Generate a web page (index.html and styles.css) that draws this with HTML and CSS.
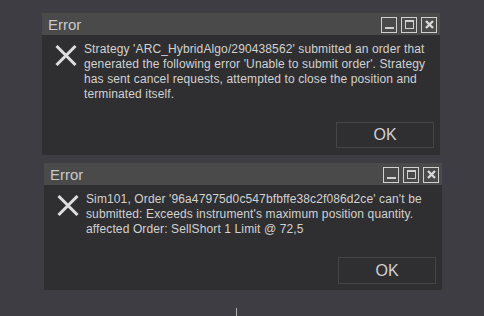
FILE: index.html
```html
<!DOCTYPE html>
<html lang="en">
<head>
  <meta charset="UTF-8">
  <title>Error</title>
  <link rel="stylesheet" href="styles.css">
</head>
<body>

  <div class="dialog first">
    <div class="title-bar">
      <span class="title">Error</span>
      <div class="win-buttons">
        <span class="win-btn min"></span>
        <span class="win-btn max"></span>
        <span class="win-btn close">
          <svg width="11" height="11" viewBox="0 0 11 11"><path d="M2 2 L9 9 M9 2 L2 9" stroke="#d8d8d8" stroke-width="2.4"/></svg>
        </span>
      </div>
    </div>
    <div class="dialog-body">
      <div class="message">
        <svg class="icon" width="22" height="21" viewBox="0 0 22 21"><path d="M1.5 1 L20.5 20 M20.5 1 L1.5 20" stroke="#dedede" stroke-width="3"/></svg>
        <p>Strategy 'ARC_HybridAlgo/290438562' submitted an order that generated the following error 'Unable to submit order'. Strategy has sent cancel requests, attempted to close the position and terminated itself.</p>
      </div>
      <button class="ok">OK</button>
    </div>
  </div>

  <div class="dialog second">
    <div class="title-bar">
      <span class="title">Error</span>
      <div class="win-buttons">
        <span class="win-btn min"></span>
        <span class="win-btn max"></span>
        <span class="win-btn close">
          <svg width="11" height="11" viewBox="0 0 11 11"><path d="M2 2 L9 9 M9 2 L2 9" stroke="#d8d8d8" stroke-width="2.4"/></svg>
        </span>
      </div>
    </div>
    <div class="dialog-body">
      <div class="message">
        <svg class="icon" width="22" height="21" viewBox="0 0 22 21"><path d="M1.5 1 L20.5 20 M20.5 1 L1.5 20" stroke="#dedede" stroke-width="3"/></svg>
        <p>Sim101, Order '96a47975d0c547bfbffe38c2f086d2ce' can't be submitted: Exceeds instrument's maximum position quantity. affected Order: SellShort 1 Limit @ 72,5</p>
      </div>
      <button class="ok">OK</button>
    </div>
  </div>

  <div class="tick"></div>

</body>
</html>
```

FILE: styles.css
```css
body {
  margin: 0;
  height: 316px;
  overflow: hidden;
  background-color: #3e3d43;
  font-family: "Liberation Sans", Arial, sans-serif;
  padding-top: 13px;
  box-sizing: border-box;
}

.dialog {
  width: 398px;
  display: flex;
  flex-direction: column;
  background-color: #2f2f31;
}

.dialog.first {
  margin-left: 42px;
  height: 142px;
}

.dialog.second {
  margin-left: 44px;
  margin-top: 8px;
  height: 127px;
}

.title-bar {
  height: 22px;
  background-color: #4a4a4a;
  display: flex;
  align-items: center;
  justify-content: space-between;
  padding: 0 3px 0 6px;
}

.title {
  color: #c9c9c9;
  font-size: 15px;
}

.win-buttons {
  display: flex;
  gap: 4px;
  margin-top: 1px;
}

.win-btn {
  width: 16px;
  height: 16px;
  box-sizing: border-box;
  border: 1.5px solid #d0d0d0;
  display: flex;
  align-items: center;
  justify-content: center;
}

.win-btn.min::after {
  content: "";
  width: 9px;
  height: 2px;
  background: #d0d0d0;
  margin-top: 6px;
}

.win-btn.max::after {
  content: "";
  width: 9px;
  height: 9px;
  box-sizing: border-box;
  border: 1px solid #d0d0d0;
  border-top-width: 2px;
}

.dialog-body {
  flex: 1;
  display: flex;
  flex-direction: column;
  padding: 0 6px 7px 13px;
}

.second .dialog-body {
  padding-bottom: 6px;
}

.message {
  display: flex;
  align-items: flex-start;
  gap: 7px;
  padding-top: 10px;
}

.icon {
  flex: none;
}

.message p {
  margin: -3px 0 0 0;
  color: #d2d2d2;
  font-size: 12px;
  letter-spacing: 0.12px;
  line-height: 15px;
}

.ok {
  margin-top: auto;
  align-self: flex-end;
  width: 98px;
  height: 26px;
  background-color: #2f2f31;
  border: 1px solid #454547;
  color: #d0d0d0;
  font-family: "Liberation Sans", Arial, sans-serif;
  font-size: 16px;
  padding: 0;
}

.second .ok {
  height: 27px;
}

.tick {
  width: 1px;
  height: 8px;
  margin: 18px 0 0 236px;
  background: #b0b0b0;
}
```
